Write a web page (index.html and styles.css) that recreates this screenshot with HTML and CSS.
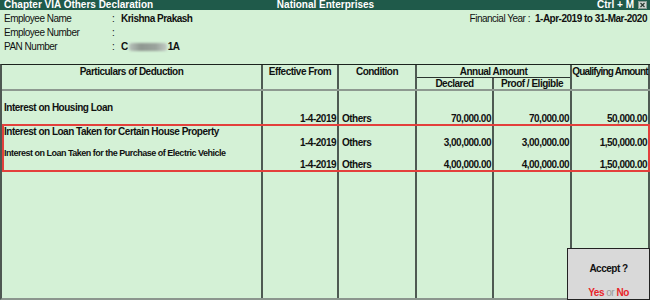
FILE: index.html
```html
<!DOCTYPE html>
<html>
<head>
<meta charset="utf-8">
<link rel="stylesheet" href="styles.css">
</head>
<body>
<div class="window">
  <div class="titlebar">
    <span class="t-left">Chapter VIA Others Declaration</span>
    <span class="t-center">National Enterprises</span>
    <span class="t-right">Ctrl + M
      <svg class="close" width="9" height="8" viewBox="0 0 9 8"><rect x="0.5" y="0.5" width="8" height="7" fill="#cfd6d2" stroke="#8a9a92"/><path d="M2.5 2 L6.5 6 M6.5 2 L2.5 6" stroke="#2a3a32" stroke-width="1.2"/></svg>
    </span>
  </div>

  <div class="info">
    <div class="info-row">
      <span class="lbl">Employee Name</span><span class="colon">:</span><span class="val">Krishna Prakash</span>
      <span class="fy"><span class="fy-lbl">Financial Year :</span><span class="val">1-Apr-2019 to 31-Mar-2020</span></span>
    </div>
    <div class="info-row">
      <span class="lbl">Employee Number</span><span class="colon">:</span>
    </div>
    <div class="info-row">
      <span class="lbl">PAN Number</span><span class="colon">:</span><span class="val">C<span class="blur"></span>1A</span>
    </div>
  </div>

  <div class="table">
    <div class="row head">
      <div class="hc">Particulars of Deduction</div>
      <div class="hc">Effective From</div>
      <div class="hc">Condition</div>
      <div class="hc annual">
        <div class="ann-top">Annual Amount</div>
        <div class="ann-sub"><div>Declared</div><div>Proof / Eligible</div></div>
      </div>
      <div class="hc qual">Qualifying Amount</div>
    </div>

    <div class="row blank"><div></div><div></div><div></div><div></div><div></div><div></div></div>
    <div class="row line"><div class="desc">Interest on Housing Loan</div><div></div><div></div><div></div><div></div><div></div></div>
    <div class="row line"><div></div><div class="date">1-4-2019</div><div class="cond">Others</div><div class="amt">70,000.00</div><div class="amt">70,000.00</div><div class="amt">50,000.00</div></div>

    <div class="group">
      <div class="row line first"><div class="desc">Interest on Loan Taken for Certain House Property</div><div></div><div></div><div></div><div></div><div></div></div>
      <div class="row line"><div></div><div class="date">1-4-2019</div><div class="cond">Others</div><div class="amt">3,00,000.00</div><div class="amt">3,00,000.00</div><div class="amt">1,50,000.00</div></div>
      <div class="row line"><div class="desc small">Interest on Loan Taken for the Purchase of Electric Vehicle</div><div></div><div></div><div></div><div></div><div></div></div>
      <div class="row line last"><div></div><div class="date">1-4-2019</div><div class="cond">Others</div><div class="amt">4,00,000.00</div><div class="amt">4,00,000.00</div><div class="amt">1,50,000.00</div></div>
    </div>

    <div class="row filler"><div></div><div></div><div></div><div></div><div></div><div></div></div>
  </div>

  <div class="accept">
    <div class="acc-q">Accept ?</div>
    <div class="acc-a"><span class="yn">Yes</span> <span class="or">or</span> <span class="yn">No</span></div>
  </div>
</div>
</body>
</html>
```

FILE: styles.css
```css
* { box-sizing: border-box; margin: 0; padding: 0; }
html, body { width: 650px; height: 300px; overflow: hidden; }
body {
  font-family: "Liberation Sans", Arial, sans-serif;
  font-size: 10px;
  letter-spacing: -0.5px;
  color: #111;
  background: #d4f1d6;
}
.window {
  position: relative;
  width: 650px;
  height: 300px;
  display: flex;
  flex-direction: column;
}
.titlebar {
  height: 10px;
  flex: none;
  background: #1f5a4a;
  color: #fff;
  font-weight: bold;
  line-height: 10px;
  letter-spacing: 0;
  display: grid;
  grid-template-columns: 1fr auto 1fr;
  padding: 0 3px 0 4px;
}
.t-right {
  justify-self: end;
  display: flex;
  align-items: center;
  gap: 4px;
}
.close { display: block; }

.info { flex: none; padding: 2px 3px 10px 4px; }
.info-row { display: flex; height: 14px; line-height: 14px; }
.lbl { width: 108px; }
.colon { width: 9px; }
.val { font-weight: bold; }
.fy { margin-left: auto; display: flex; }
.fy-lbl { margin-right: 5px; }
.blur {
  display: inline-block;
  width: 38px;
  height: 8px;
  margin: 0 1px 0 1px;
  vertical-align: -1px;
  background: linear-gradient(90deg, #b9c3bc, #8f9891 30%, #9aa39c 70%, #c2cbc4);
  border-radius: 3px;
  filter: blur(1.2px);
}

.table {
  flex: 1;
  display: flex;
  flex-direction: column;
  border-left: 2px solid #4e5852;
  border-top: 1px solid #1b241e;
  border-bottom: 2px solid #8b968e;
}
.row {
  display: grid;
  grid-template-columns: 261px 76px 78px 77px 78px 78px;
}
.row > div { border-right: 2px solid #4e5a52; }

.head {
  height: 26px;
  border-bottom: 2px solid #8d9990;
  font-weight: bold;
  text-align: center;
}
.hc { line-height: 12px; padding-top: 1px; }
.annual { grid-column: span 2; padding-top: 0; display: flex; flex-direction: column; }
.ann-top { height: 13px; line-height: 12px; padding-top: 1px; border-bottom: 1px solid #2b352f; }
.ann-sub { flex: 1; display: grid; grid-template-columns: 77px 76px; line-height: 11px; }
.ann-sub > div:first-child { border-right: 2px solid #4e5a52; }
.qual { letter-spacing: -0.8px; white-space: nowrap; }

.blank { height: 11px; }
.line { line-height: 11px; font-weight: bold; }
.desc { padding-left: 2px; white-space: nowrap; }
.desc.small { font-size: 9px; }
.date { text-align: right; padding-right: 1px; }
.cond { padding-left: 3px; }
.amt { text-align: right; padding-right: 1px; }

.group { position: relative; }
.group::after {
  content: "";
  position: absolute;
  inset: 0;
  border: 2px solid #e3403c;
  pointer-events: none;
}
.group .first > div { padding-top: 2px; }
.group .last > div { padding-bottom: 2px; }

.filler { flex: 1; }

.accept {
  position: absolute;
  right: 0;
  bottom: 0;
  width: 83px;
  height: 52px;
  background: #d9d9d9;
  border: 1px solid #222;
  text-align: center;
  font-weight: bold;
}
.acc-q { margin-top: 14px; line-height: 12px; }
.acc-a { margin-top: 12px; line-height: 12px; }
.yn { color: #e8262b; }
.or { color: #9a9a9a; font-weight: normal; }
```
